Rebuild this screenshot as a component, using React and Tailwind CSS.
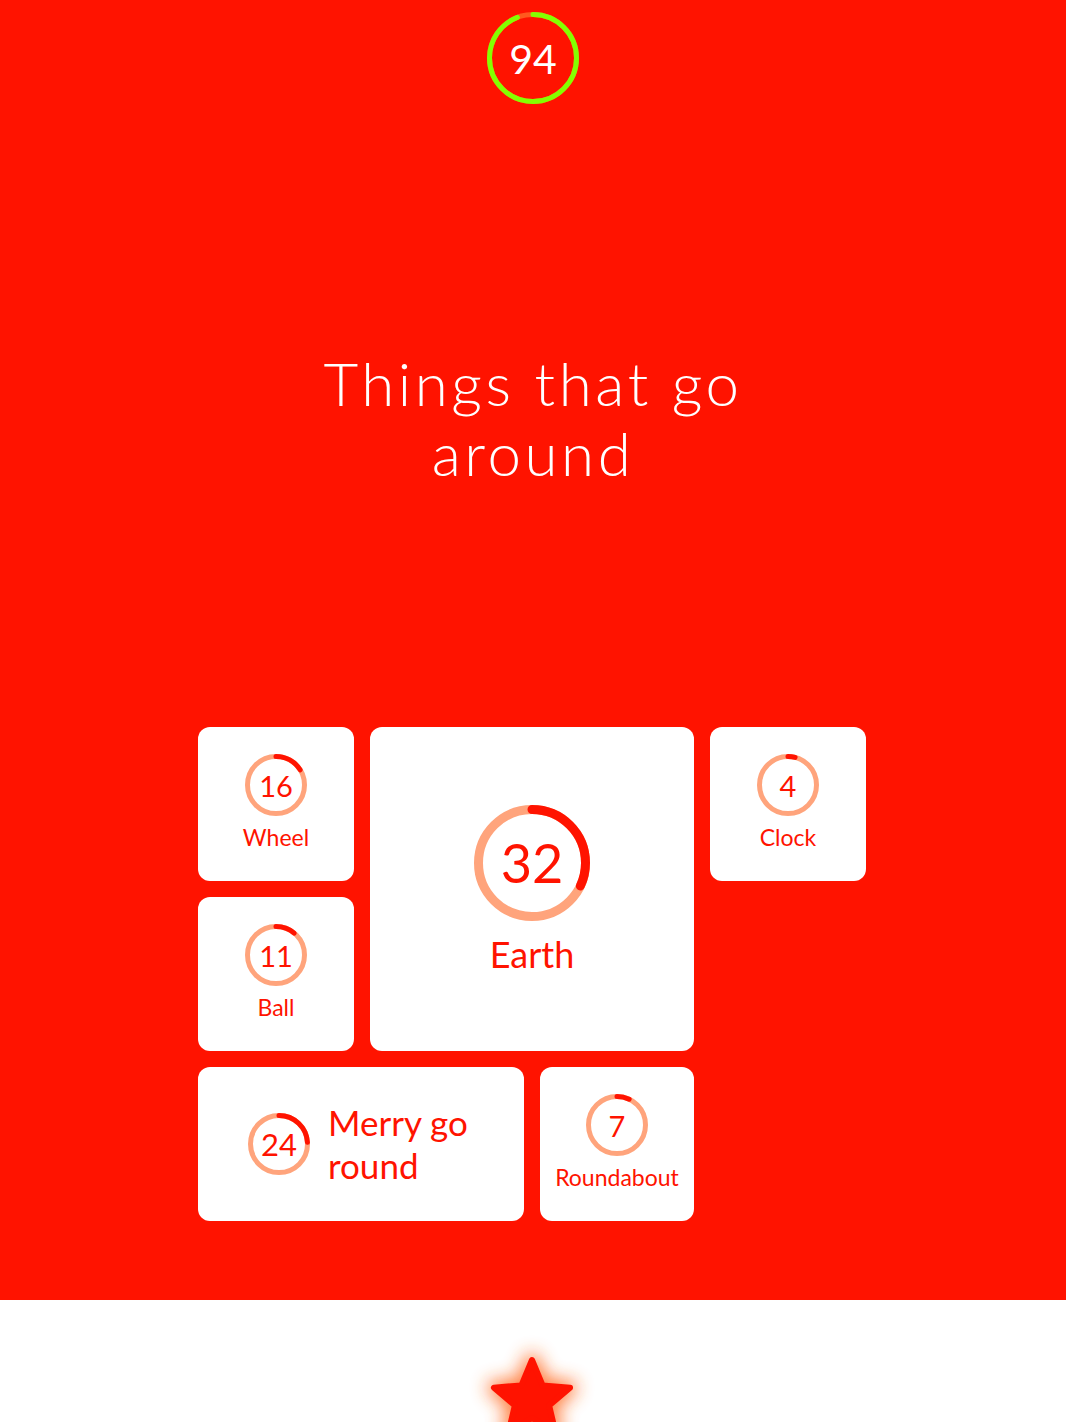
import React from 'react';

const RED = '#ff1300';

const Ring = ({ size, stroke, value, track, bar, children, textClass }) => {
  const r = (size - stroke) / 2;
  const c = 2 * Math.PI * r;
  const len = (value / 100) * c;
  return (
    <div className="relative shrink-0" style={{ width: size, height: size }}>
      <svg width={size} height={size} className="-rotate-90">
        <circle cx={size / 2} cy={size / 2} r={r} fill="none" stroke={track} strokeWidth={stroke} />
        <circle
          cx={size / 2}
          cy={size / 2}
          r={r}
          fill="none"
          stroke={bar}
          strokeWidth={stroke}
          strokeLinecap="round"
          strokeDasharray={`${len} ${c}`}
        />
      </svg>
      <div className={`absolute inset-0 flex items-center justify-center ${textClass}`}>{children}</div>
    </div>
  );
};

const SmallTile = ({ n, label }) => (
  <div className="bg-white rounded-[12px] flex flex-col items-center pt-[27px]">
    <Ring size={62} stroke={5} value={n} track="#ffa47c" bar={RED} textClass="text-[29px] leading-none text-[#ff1300]">
      {n}
    </Ring>
    <div className="mt-[7px] text-[23px] leading-[28px] text-[#ff1300]">{label}</div>
  </div>
);

export default function App() {
  const star = '70,30 80.58,55.44 108.04,57.64 87.12,75.56 93.51,102.36 70,88 46.49,102.36 52.88,75.56 31.96,57.64 59.42,55.44';
  return (
    <div className="w-[1066px] font-['Lato','Noto_Sans',sans-serif]">
      <div className="h-[1300px] bg-[#ff1300] flex flex-col items-center">
        <div className="mt-[12px]">
          <Ring size={92} stroke={5} value={94} track="#ff5a1e" bar="#84ff00" textClass="text-[41px] font-normal leading-none text-white">
            94
          </Ring>
        </div>
        <h1 className="mt-[244px] text-center text-white font-light text-[60px] leading-[70px] tracking-[0.06em]">
          Things that go
          <br />
          around
        </h1>
        <div className="mt-auto mb-[79px] mr-[2px] grid grid-cols-[156px_154px_154px_156px] grid-rows-[154px_154px_154px] gap-[16px]">
          <SmallTile n={16} label="Wheel" />
          <div className="col-span-2 row-span-2 bg-white rounded-[12px] flex flex-col items-center justify-center">
            <Ring size={116} stroke={9} value={32} track="#ffa47c" bar={RED} textClass="text-[54px] leading-none text-[#ff1300]">
              32
            </Ring>
            <div className="mt-[13px] text-[36px] leading-[40px] text-[#ff1300]">Earth</div>
          </div>
          <SmallTile n={4} label="Clock" />
          <SmallTile n={11} label="Ball" />
          <div className="col-start-1 col-span-2 bg-white rounded-[12px] flex items-center pl-[50px] gap-[18px]">
            <Ring size={62} stroke={5} value={24} track="#ffa47c" bar={RED} textClass="text-[31px] leading-none text-[#ff1300]">
              24
            </Ring>
            <div className="text-[35px] leading-[43px] text-[#ff1300]">
              Merry go
              <br />
              round
            </div>
          </div>
          <SmallTile n={7} label="Roundabout" />
        </div>
      </div>
      <div className="h-[122px] bg-white overflow-hidden flex justify-center pt-[30px] pr-[2px]">
        <svg width="140" height="140" viewBox="0 0 140 140" className="shrink-0 overflow-visible">
          <defs>
            <filter id="glow" x="-50%" y="-50%" width="200%" height="200%">
              <feGaussianBlur stdDeviation="9" />
            </filter>
          </defs>
          <polygon points={star} fill="#ff5a10" stroke="#ff6a20" strokeWidth="14" strokeLinejoin="round" filter="url(#glow)" opacity="0.85" />
          <polygon points={star} fill={RED} stroke={RED} strokeWidth="6" strokeLinejoin="round" />
        </svg>
      </div>
    </div>
  );
}
